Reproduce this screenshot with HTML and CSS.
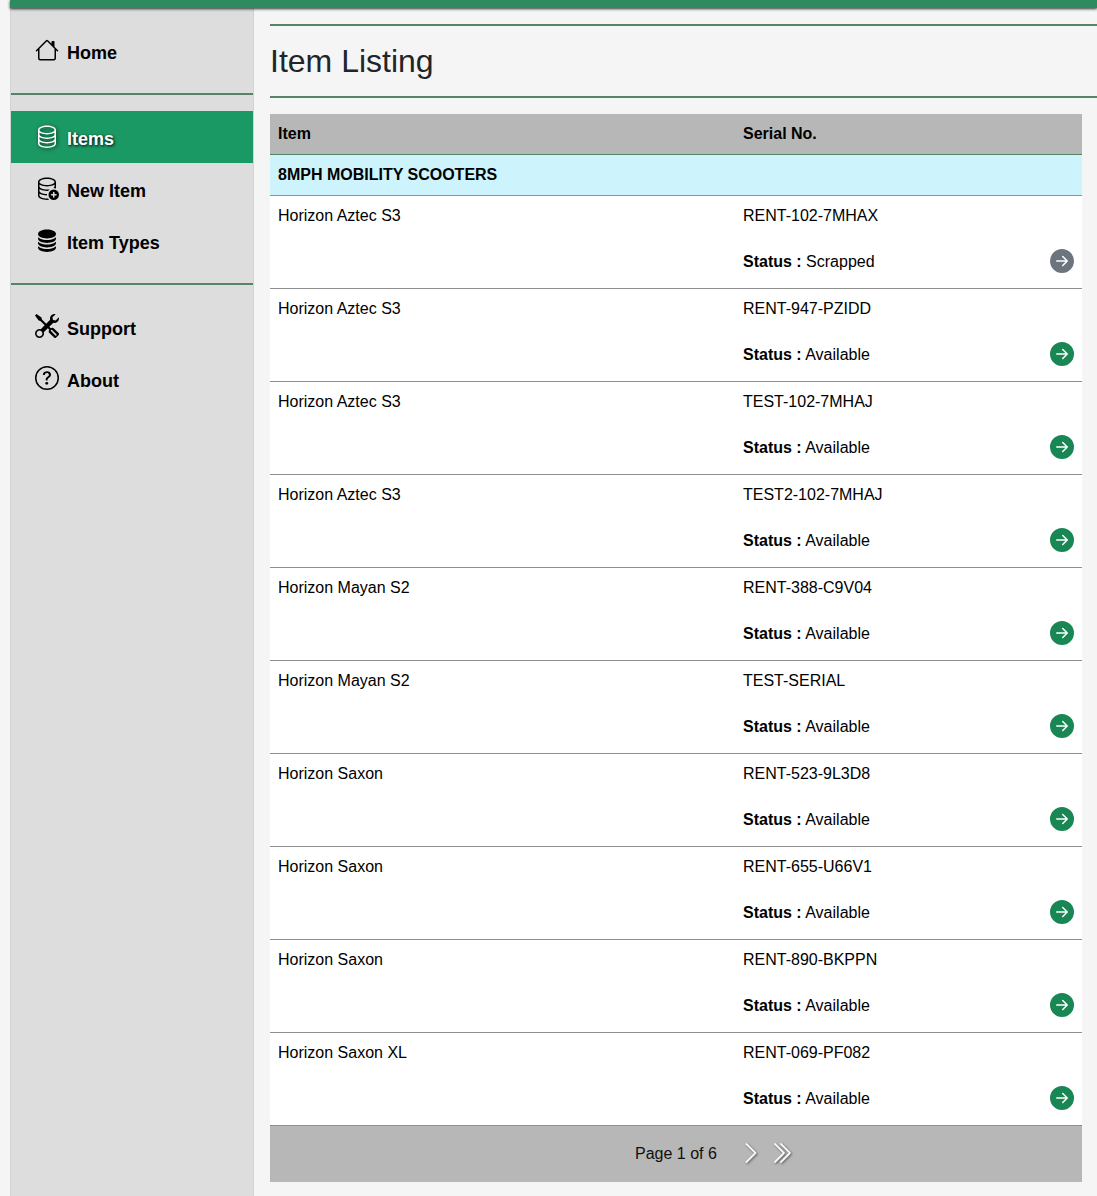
FILE: index.html
```html
<!DOCTYPE html>
<html lang="en">
<head>
<meta charset="utf-8">
<title>Item Listing</title>
<link rel="stylesheet" href="styles.css">
</head>
<body>
<svg class="defs" aria-hidden="true">
  <symbol id="arrow" viewBox="0 0 16 16"><path d="M8 0a8 8 0 1 1 0 16A8 8 0 0 1 8 0zM4.5 7.5a.5.5 0 0 0 0 1h5.793l-2.147 2.146a.5.5 0 0 0 .708.708l3-3a.5.5 0 0 0 0-.708l-3-3a.5.5 0 1 0-.708.708L10.293 7.5H4.5z"/></symbol>
</svg>
<header class="topbar"></header>
<div class="layout">
  <nav class="sidebar">
    <ul class="menu menu-home">
      <li class="menu-item"><svg class="icon" viewBox="0 0 16 16"><path d="M8.707 1.5a1 1 0 0 0-1.414 0L.646 8.146a.5.5 0 0 0 .708.708L2 8.207V13.5A1.5 1.5 0 0 0 3.5 15h9a1.5 1.5 0 0 0 1.5-1.5V8.207l.646.647a.5.5 0 0 0 .708-.708L13 5.793V2.5a.5.5 0 0 0-.5-.5h-1a.5.5 0 0 0-.5.5v1.293L8.707 1.5ZM13 7.207V13.5a.5.5 0 0 1-.5.5h-9a.5.5 0 0 1-.5-.5V7.207l5-5 5 5Z"/></svg><span>Home</span></li>
    </ul>
    <ul class="menu menu-items">
      <li class="menu-item active"><svg class="icon" viewBox="0 0 16 16"><path d="M4.318 2.687C5.234 2.271 6.536 2 8 2s2.766.27 3.682.687C12.644 3.125 13 3.627 13 4c0 .374-.356.875-1.318 1.313C10.766 5.729 9.464 6 8 6s-2.766-.27-3.682-.687C3.356 4.875 3 4.373 3 4c0-.374.356-.875 1.318-1.313ZM13 5.698V7c0 .374-.356.875-1.318 1.313C10.766 8.729 9.464 9 8 9s-2.766-.27-3.682-.687C3.356 7.875 3 7.373 3 7V5.698c.271.202.58.378.904.525C4.978 6.711 6.427 7 8 7s3.022-.289 4.096-.777A4.92 4.92 0 0 0 13 5.698ZM14 4c0-1.007-.875-1.755-1.904-2.223C11.022 1.289 9.573 1 8 1s-3.022.289-4.096.777C2.875 2.245 2 2.993 2 4v9c0 1.007.875 1.755 1.904 2.223C4.978 15.71 6.427 16 8 16s3.022-.289 4.096-.777C13.125 14.755 14 14.007 14 13V4Zm-1 4.698V10c0 .374-.356.875-1.318 1.313C10.766 11.729 9.464 12 8 12s-2.766-.27-3.682-.687C3.356 10.875 3 10.373 3 10V8.698c.271.202.58.378.904.525C4.978 9.71 6.427 10 8 10s3.022-.289 4.096-.777A4.92 4.92 0 0 0 13 8.698Zm0 3V13c0 .374-.356.875-1.318 1.313C10.766 14.729 9.464 15 8 15s-2.766-.27-3.682-.687C3.356 13.875 3 13.373 3 13v-1.302c.271.202.58.378.904.525C4.978 12.71 6.427 13 8 13s3.022-.289 4.096-.777c.324-.147.633-.323.904-.525Z"/></svg><span>Items</span></li>
      <li class="menu-item"><svg class="icon" viewBox="0 0 16 16"><path d="M12.5 16a3.5 3.5 0 1 0 0-7 3.5 3.5 0 0 0 0 7Zm.5-5v1h1a.5.5 0 0 1 0 1h-1v1a.5.5 0 0 1-1 0v-1h-1a.5.5 0 0 1 0-1h1v-1a.5.5 0 0 1 1 0Z"/><path d="M12.096 6.223A4.92 4.92 0 0 0 13 5.698V7c0 .289-.213.654-.753 1.007a4.493 4.493 0 0 1 1.753.25V4c0-1.007-.875-1.755-1.904-2.223C11.022 1.289 9.573 1 8 1s-3.022.289-4.096.777C2.875 2.245 2 2.993 2 4v9c0 1.007.875 1.755 1.904 2.223C4.978 15.71 6.427 16 8 16c.536 0 1.058-.034 1.555-.097a4.525 4.525 0 0 1-.813-.927C8.5 14.992 8.252 15 8 15c-1.464 0-2.766-.27-3.682-.687C3.356 13.875 3 13.373 3 13v-1.302c.271.202.58.378.904.525C4.978 12.71 6.427 13 8 13h.027a4.552 4.552 0 0 1 0-1H8c-1.464 0-2.766-.27-3.682-.687C3.356 10.875 3 10.373 3 10V8.698c.271.202.58.378.904.525C4.978 9.71 6.427 10 8 10c.262 0 .52-.008.774-.024a4.525 4.525 0 0 1 1.102-1.132C9.298 8.944 8.666 9 8 9c-1.464 0-2.766-.27-3.682-.687C3.356 7.875 3 7.373 3 7V5.698c.271.202.58.378.904.525C4.978 6.711 6.427 7 8 7s3.022-.289 4.096-.777ZM3 4c0-.374.356-.875 1.318-1.313C5.234 2.271 6.536 2 8 2s2.766.27 3.682.687C12.644 3.125 13 3.627 13 4c0 .374-.356.875-1.318 1.313C10.766 5.729 9.464 6 8 6s-2.766-.27-3.682-.687C3.356 4.875 3 4.373 3 4Z"/></svg><span>New Item</span></li>
      <li class="menu-item"><svg class="icon" viewBox="0 0 16 16"><path d="M3.904 1.777C4.978 1.289 6.427 1 8 1s3.022.289 4.096.777C13.125 2.245 14 2.993 14 4s-.875 1.755-1.904 2.223C11.022 6.711 9.573 7 8 7s-3.022-.289-4.096-.777C2.875 5.755 2 5.007 2 4s.875-1.755 1.904-2.223Z"/><path d="M2 6.161V7c0 1.007.875 1.755 1.904 2.223C4.978 9.71 6.427 10 8 10s3.022-.289 4.096-.777C13.125 8.755 14 8.007 14 7v-.839c-.457.432-1.004.751-1.49.972C11.278 7.693 9.682 8 8 8s-3.278-.307-4.51-.867c-.486-.22-1.033-.54-1.49-.972Z"/><path d="M2 9.161V10c0 1.007.875 1.755 1.904 2.223C4.978 12.711 6.427 13 8 13s3.022-.289 4.096-.777C13.125 11.755 14 11.007 14 10v-.839c-.457.432-1.004.751-1.49.972-1.232.56-2.828.867-4.51.867s-3.278-.307-4.51-.867c-.486-.22-1.033-.54-1.49-.972Z"/><path d="M2 12.161V13c0 1.007.875 1.755 1.904 2.223C4.978 15.711 6.427 16 8 16s3.022-.289 4.096-.777C13.125 14.755 14 14.007 14 13v-.839c-.457.432-1.004.751-1.49.972-1.232.56-2.828.867-4.51.867s-3.278-.307-4.51-.867c-.486-.22-1.033-.54-1.49-.972Z"/></svg><span>Item Types</span></li>
    </ul>
    <ul class="menu menu-help">
      <li class="menu-item"><svg class="icon" viewBox="0 0 16 16"><path d="M1 0 0 1l2.2 3.081a1 1 0 0 0 .815.419h.07a1 1 0 0 1 .708.293l2.675 2.675-2.617 2.654A3.003 3.003 0 0 0 0 13a3 3 0 1 0 5.878-.851l2.654-2.617.968.968-.305.914a1 1 0 0 0 .242 1.023l3.27 3.27a.997.997 0 0 0 1.414 0l1.586-1.586a.997.997 0 0 0 0-1.414l-3.27-3.27a1 1 0 0 0-1.023-.242L10.5 9.5l-.96-.96 2.68-2.643A3.005 3.005 0 0 0 16 3c0-.269-.035-.53-.102-.777l-2.14 2.141L12 4l-.364-1.757L13.777.102a3 3 0 0 0-3.675 3.68L7.462 6.46 4.793 3.793a1 1 0 0 1-.293-.707v-.071a1 1 0 0 0-.419-.814L1 0Zm9.646 10.646a.5.5 0 0 1 .708 0l2.914 2.915a.5.5 0 0 1-.707.707l-2.915-2.914a.5.5 0 0 1 0-.708ZM3 11l.471.242.529.026.287.445.445.287.026.529L5 13l-.242.471-.026.529-.445.287-.287.445-.529.026L3 15l-.471-.242L2 14.732l-.287-.445L1.268 14l-.026-.529L1 13l.242-.471.026-.529.445-.287.287-.445.529-.026L3 11Z"/></svg><span>Support</span></li>
      <li class="menu-item"><svg class="icon" viewBox="0 0 16 16"><path d="M8 15A7 7 0 1 1 8 1a7 7 0 0 1 0 14zm0 1A8 8 0 1 0 8 0a8 8 0 0 0 0 16z"/><path d="M5.255 5.786a.237.237 0 0 0 .241.247h.825c.138 0 .248-.113.266-.25.09-.656.54-1.134 1.342-1.134.686 0 1.314.343 1.314 1.168 0 .635-.374.927-.965 1.371-.673.489-1.206 1.06-1.168 1.987l.003.217a.25.25 0 0 0 .25.246h.811a.25.25 0 0 0 .25-.25v-.105c0-.718.273-.927 1.01-1.486.609-.463 1.244-.977 1.244-2.056 0-1.511-1.276-2.241-2.673-2.241-1.267 0-2.655.59-2.75 2.286zm1.557 5.763c0 .533.425.927 1.01.927.609 0 1.028-.394 1.028-.927 0-.552-.42-.94-1.029-.94-.584 0-1.009.388-1.009.94z"/></svg><span>About</span></li>
    </ul>
  </nav>
  <main class="content">
    <h1 class="title">Item Listing</h1>
    <div class="listing">
      <div class="row head"><div class="cell">Item</div><div class="cell">Serial No.</div></div>
      <div class="group">8MPH MOBILITY SCOOTERS</div>

      <div class="row item"><div class="cell">Horizon Aztec S3</div><div class="cell detail"><div class="serial">RENT-102-7MHAX</div><div class="status"><span><b>Status :</b> Scrapped</span><svg class="go go-off" viewBox="0 0 16 16"><use href="#arrow"/></svg></div></div></div>
      <div class="row item"><div class="cell">Horizon Aztec S3</div><div class="cell detail"><div class="serial">RENT-947-PZIDD</div><div class="status"><span><b>Status :</b> Available</span><svg class="go" viewBox="0 0 16 16"><use href="#arrow"/></svg></div></div></div>
      <div class="row item"><div class="cell">Horizon Aztec S3</div><div class="cell detail"><div class="serial">TEST-102-7MHAJ</div><div class="status"><span><b>Status :</b> Available</span><svg class="go" viewBox="0 0 16 16"><use href="#arrow"/></svg></div></div></div>
      <div class="row item"><div class="cell">Horizon Aztec S3</div><div class="cell detail"><div class="serial">TEST2-102-7MHAJ</div><div class="status"><span><b>Status :</b> Available</span><svg class="go" viewBox="0 0 16 16"><use href="#arrow"/></svg></div></div></div>
      <div class="row item"><div class="cell">Horizon Mayan S2</div><div class="cell detail"><div class="serial">RENT-388-C9V04</div><div class="status"><span><b>Status :</b> Available</span><svg class="go" viewBox="0 0 16 16"><use href="#arrow"/></svg></div></div></div>
      <div class="row item"><div class="cell">Horizon Mayan S2</div><div class="cell detail"><div class="serial">TEST-SERIAL</div><div class="status"><span><b>Status :</b> Available</span><svg class="go" viewBox="0 0 16 16"><use href="#arrow"/></svg></div></div></div>
      <div class="row item"><div class="cell">Horizon Saxon</div><div class="cell detail"><div class="serial">RENT-523-9L3D8</div><div class="status"><span><b>Status :</b> Available</span><svg class="go" viewBox="0 0 16 16"><use href="#arrow"/></svg></div></div></div>
      <div class="row item"><div class="cell">Horizon Saxon</div><div class="cell detail"><div class="serial">RENT-655-U66V1</div><div class="status"><span><b>Status :</b> Available</span><svg class="go" viewBox="0 0 16 16"><use href="#arrow"/></svg></div></div></div>
      <div class="row item"><div class="cell">Horizon Saxon</div><div class="cell detail"><div class="serial">RENT-890-BKPPN</div><div class="status"><span><b>Status :</b> Available</span><svg class="go" viewBox="0 0 16 16"><use href="#arrow"/></svg></div></div></div>
      <div class="row item"><div class="cell">Horizon Saxon XL</div><div class="cell detail"><div class="serial">RENT-069-PF082</div><div class="status"><span><b>Status :</b> Available</span><svg class="go" viewBox="0 0 16 16"><use href="#arrow"/></svg></div></div></div>

      <div class="pager">
        <span class="page-label">Page 1 of 6</span>
        <svg class="chev" viewBox="0 0 16 16"><path d="M4.646 1.646a.5.5 0 0 1 .708 0l6 6a.5.5 0 0 1 0 .708l-6 6a.5.5 0 0 1-.708-.708L10.293 8 4.646 2.354a.5.5 0 0 1 0-.708z"/></svg>
        <svg class="chev chev-double" viewBox="0 0 16 16"><path d="M3.646 1.646a.5.5 0 0 1 .708 0l6 6a.5.5 0 0 1 0 .708l-6 6a.5.5 0 0 1-.708-.708L9.293 8 3.646 2.354a.5.5 0 0 1 0-.708z"/><path d="M7.646 1.646a.5.5 0 0 1 .708 0l6 6a.5.5 0 0 1 0 .708l-6 6a.5.5 0 0 1-.708-.708L13.293 8 7.646 2.354a.5.5 0 0 1 0-.708z"/></svg>
      </div>
    </div>
  </main>
</div>
</body>
</html>
```

FILE: styles.css
```css
* { box-sizing: border-box; }
html, body { height: 100%; }
body {
  margin: 0;
  background: #f5f5f5;
  color: #000;
  font-family: "Liberation Sans", Arial, sans-serif;
  font-size: 16px;
  line-height: 24px;
  overflow: hidden;
  display: flex;
  flex-direction: column;
}
.defs { display: none; }

.topbar {
  flex: none;
  height: 8px;
  margin-left: 10px;
  background: #2e8b5f;
  box-shadow: 0 1px 3px rgba(0, 0, 0, .8);
  position: relative;
  z-index: 1;
}
.layout { flex: 1; display: flex; min-height: 0; }

.sidebar {
  flex: none;
  width: 244px;
  margin-left: 10px;
  background: #dddddd;
  border-left: 1px solid #d2d2d2;
  border-right: 1px solid #d2d2d2;
}
.menu { list-style: none; margin: 0; padding: 0; }
.menu-home { padding: 18px 0 15px; border-bottom: 2px solid #558466; }
.menu-items { padding: 16px 0; border-bottom: 2px solid #558466; }
.menu-help { padding-top: 18px; }
.menu-item {
  height: 52px;
  display: flex;
  align-items: center;
  gap: 8px;
  padding-left: 24px;
  font-size: 18px;
  font-weight: 700;
}
.menu-home .menu-item { padding-top: 2px; }
.menu-items .menu-item { padding-top: 4px; }
.icon { width: 24px; height: 24px; flex: none; fill: currentColor; position: relative; top: -3px; }
.menu-item.active {
  background: #1b9964;
  color: #fff;
  text-shadow: 1px 1px 3px #000;
}
.active .icon { filter: drop-shadow(1px 1px 2px rgba(0, 0, 0, .7)); }

.content { flex: 1; min-width: 0; padding: 16px 0 0 16px; }
.title {
  margin: 0 0 16px;
  height: 74px;
  border-top: 2px solid #558466;
  border-bottom: 2px solid #558466;
  font-size: 32px;
  font-weight: 400;
  line-height: 70px;
  color: #212529;
}
.listing { width: 812px; }
.row { display: grid; grid-template-columns: 465px 1fr; }
.cell { padding: 0 8px; }
.head {
  height: 41px;
  background: #b7b7b7;
  border-bottom: 1px solid #558466;
  font-weight: 700;
  line-height: 39px;
}
.group {
  height: 41px;
  padding: 0 8px;
  background: #cdf3fc;
  border-bottom: 1px solid #7f9a9f;
  font-weight: 700;
  line-height: 39px;
}
.item {
  height: 93px;
  background: #fff;
  border-bottom: 1px solid #8f8f8f;
  padding-top: 8px;
}
.detail { display: flex; flex-direction: column; }
.serial { height: 24px; }
.status {
  margin-top: 22px;
  height: 24px;
  display: flex;
  align-items: center;
  justify-content: space-between;
}
.go { width: 24px; height: 24px; flex: none; fill: #198754; margin-top: -2px; }
.go-off { fill: #6c757d; }
.pager {
  height: 56px;
  padding: 0 0 2px 365px;
  background: #b7b7b7;
  display: flex;
  align-items: center;
  gap: 22px;
  color: #111;
}
.page-label { margin-top: 2px; }
.chev {
  width: 24px;
  height: 24px;
  fill: #fff;
  stroke: #fff;
  stroke-width: .25;
  filter: drop-shadow(1px 1px 1px rgba(0, 0, 0, .55));
}
.chev-double { margin-left: -16px; }
```
